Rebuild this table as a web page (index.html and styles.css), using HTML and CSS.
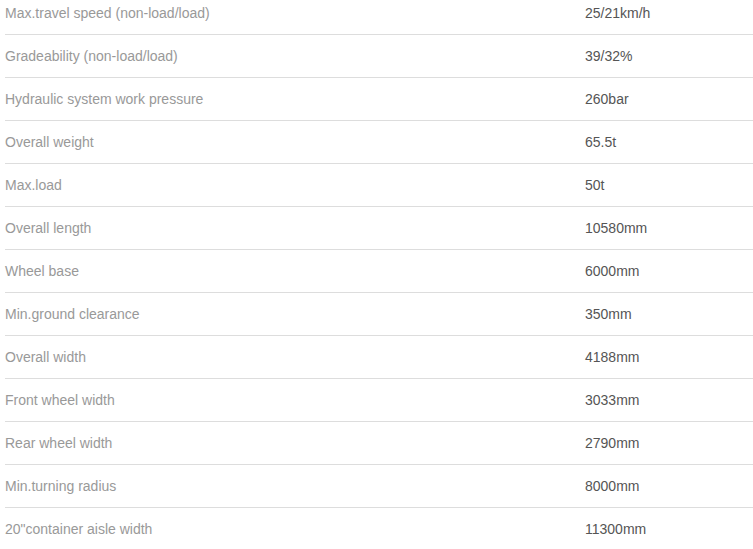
FILE: index.html
```html
<!DOCTYPE html>
<html>
<head>
<meta charset="utf-8">
<link rel="stylesheet" href="styles.css">
</head>
<body>
<div class="specs">
  <div class="row"><div class="name">Max.travel speed (non-load/load)</div><div class="value">25/21km/h</div></div>
  <div class="row"><div class="name">Gradeability (non-load/load)</div><div class="value">39/32%</div></div>
  <div class="row"><div class="name">Hydraulic system work pressure</div><div class="value">260bar</div></div>
  <div class="row"><div class="name">Overall weight</div><div class="value">65.5t</div></div>
  <div class="row"><div class="name">Max.load</div><div class="value">50t</div></div>
  <div class="row"><div class="name">Overall length</div><div class="value">10580mm</div></div>
  <div class="row"><div class="name">Wheel base</div><div class="value">6000mm</div></div>
  <div class="row"><div class="name">Min.ground clearance</div><div class="value">350mm</div></div>
  <div class="row"><div class="name">Overall width</div><div class="value">4188mm</div></div>
  <div class="row"><div class="name">Front wheel width</div><div class="value">3033mm</div></div>
  <div class="row"><div class="name">Rear wheel width</div><div class="value">2790mm</div></div>
  <div class="row"><div class="name">Min.turning radius</div><div class="value">8000mm</div></div>
  <div class="row"><div class="name">20"container aisle width</div><div class="value">11300mm</div></div>
</div>
</body>
</html>
```
FILE: styles.css
```css
html, body {
  margin: 0;
  padding: 0;
  background: #fff;
  overflow: hidden;
}
.specs {
  margin-top: -8px;
  margin-left: 5px;
  font-family: "Liberation Sans", Arial, sans-serif;
  font-size: 14px;
}
.row {
  display: grid;
  grid-template-columns: 580px 1fr;
  align-items: center;
  height: 43px;
  box-sizing: border-box;
  border-bottom: 1px solid #dddddd;
}
.name {
  color: #999999;
}
.value {
  color: #555555;
}
```
